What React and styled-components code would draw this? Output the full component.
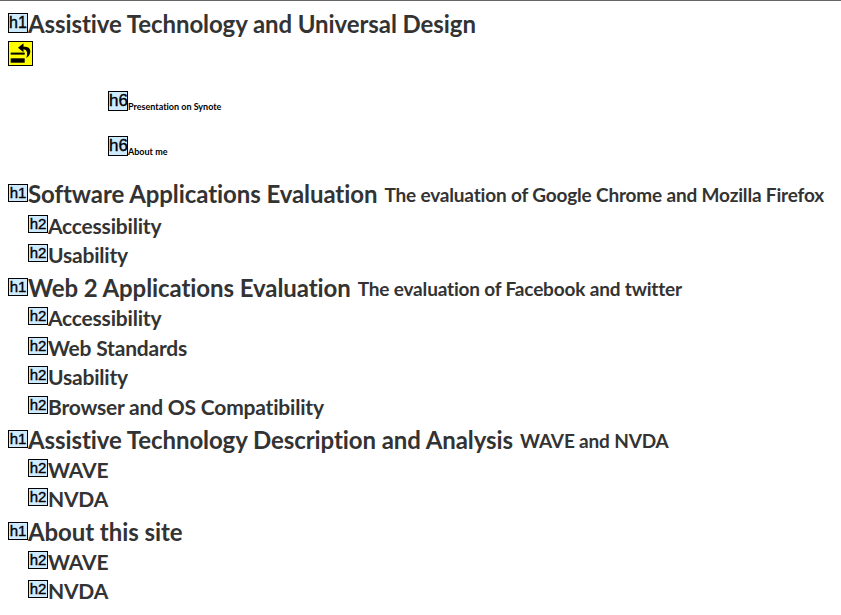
import React from 'react'
import styled, { createGlobalStyle } from 'styled-components'

const Global = createGlobalStyle`
    html, body {
        margin: 0;
        background: #fff;
        overflow: hidden;
    }
`

const Page = styled.div`
    width: 841px;
    height: 615px;
    box-sizing: border-box;
    border-top: 1px solid #666;
    padding: 12px 0 0 8px;
    font-family: Lato, "Liberation Sans", sans-serif;
    font-weight: 700;
    font-variant-ligatures: none;
    color: #333;
`

const Badge = styled.span`
    display: inline-block;
    box-sizing: border-box;
    width: 20px;
    height: ${(p) => p.$height || 18}px;
    margin-top: ${(p) => p.$offset || 0}px;
    border: 1px solid #000;
    background: #cdeaff;
    color: #000;
    font-family: "Liberation Sans", sans-serif;
    font-weight: 400;
    -webkit-text-stroke: 0.35px #000;
    font-size: ${(p) => p.$size || 15}px;
    line-height: ${(p) => (p.$height || 18) - 3}px;
    letter-spacing: 0;
    text-align: center;
    flex-shrink: 0;
`

const MainHeading = styled.div`
    display: flex;
    align-items: flex-start;
    height: ${(p) => p.$height}px;
    margin-top: ${(p) => p.$gap || 0}px;
    font-size: 24px;
    letter-spacing: -0.08px;
    line-height: 22px;
    white-space: nowrap;
`

const Tagline = styled.span`
    font-size: 19px;
    letter-spacing: -0.17px;
    margin-left: 7px;
    margin-top: 1px;
`

const SubHeading = styled.div`
    display: flex;
    align-items: flex-start;
    height: 29.7px;
    margin-left: 20px;
    font-size: 21px;
    letter-spacing: -0.2px;
    line-height: 22px;
    white-space: nowrap;
`

const SmallHeading = styled.div`
    display: flex;
    align-items: flex-start;
    margin-left: 100px;
    height: 45px;
    font-size: 9px;
    color: #000;
    white-space: nowrap;
`

const SmallText = styled.span`
    margin-top: 10px;
    line-height: 12px;
`

const SkipLink = styled.div`
    box-sizing: border-box;
    width: 25px;
    height: 25px;
    margin: 0 0 25px;
    border: 1px solid #000;
    background: #ff0;
`

const sections = [
    { title: 'Software Applications Evaluation', tag: 'The evaluation of Google Chrome and Mozilla Firefox', height: 31.5, gap: 2, subs: ['Accessibility', 'Usability'] },
    { title: 'Web 2 Applications Evaluation', tag: 'The evaluation of Facebook and twitter', height: 30, gap: 3, subs: ['Accessibility', 'Web Standards', 'Usability', 'Browser and OS Compatibility'] },
    { title: 'Assistive Technology Description and Analysis', tag: 'WAVE and NVDA', height: 30, gap: 3, subs: ['WAVE', 'NVDA'] },
    { title: 'About this site', height: 30, gap: 2.5, subs: ['WAVE', 'NVDA'] },
]

function SkipIcon() {
    return (
        <svg width="23" height="23" viewBox="0 0 23 23" style={{ display: 'block' }}>
            <rect x="1.7" y="16.3" width="14" height="4.4" fill="#000" />
            <rect x="1.7" y="10.6" width="14" height="2" fill="#000" />
            <path d="M13 4.8 H16.5 Q21.5 5.3 21.3 10 Q20.8 13.8 17.3 16 Q18.6 12.5 18 10 Q17.4 7.4 14.5 7.3 H13 Z" fill="#000" />
            <path d="M14.5 1.3 L9 5.8 L14.5 10.3 Z" fill="#000" />
        </svg>
    )
}

export default function App() {
    return (
        <Page>
            <Global />
            <MainHeading $height={28}>
                <Badge $height={20} $size={16}>h1</Badge>Assistive Technology and Universal Design
            </MainHeading>
            <SkipLink><SkipIcon /></SkipLink>
            <SmallHeading><Badge $height={20} $size={17}>h6</Badge><SmallText>Presentation on Synote</SmallText></SmallHeading>
            <SmallHeading><Badge $height={20} $size={17}>h6</Badge><SmallText>About me</SmallText></SmallHeading>
            {sections.map((s) => (
                <React.Fragment key={s.title}>
                    <MainHeading $height={s.height} $gap={s.gap}>
                        <Badge $offset={1}>h1</Badge>{s.title}{s.tag && <Tagline>{s.tag}</Tagline>}
                    </MainHeading>
                    {s.subs.map((sub) => (
                        <SubHeading key={sub}>
                            <Badge>h2</Badge>{sub}
                        </SubHeading>
                    ))}
                </React.Fragment>
            ))}
        </Page>
    )
}
